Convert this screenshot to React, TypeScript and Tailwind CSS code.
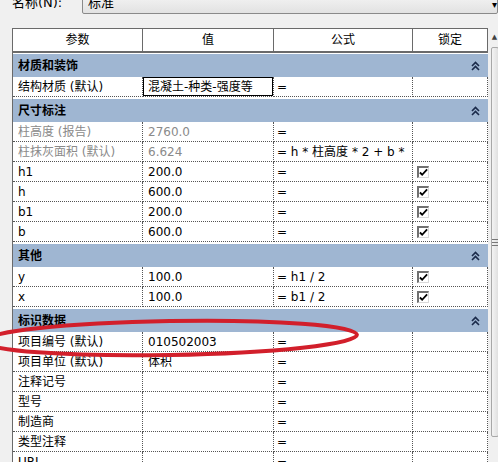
import React from 'react';

type Row =
  | { kind: 'section'; title: string }
  | { kind: 'row'; name: string; value?: string; formula?: string; locked?: boolean; muted?: boolean; editing?: boolean };

const rows: Row[] = [
  { kind: 'section', title: '材质和装饰' },
  { kind: 'row', name: '结构材质 (默认)', value: '混凝土-种类-强度等', formula: '=', editing: true },
  { kind: 'section', title: '尺寸标注' },
  { kind: 'row', name: '柱高度 (报告)', value: '2760.0', formula: '=', muted: true },
  { kind: 'row', name: '柱抹灰面积 (默认)', value: '6.624', formula: '= h * 柱高度 * 2 + b *', muted: true },
  { kind: 'row', name: 'h1', value: '200.0', formula: '=', locked: true },
  { kind: 'row', name: 'h', value: '600.0', formula: '=', locked: true },
  { kind: 'row', name: 'b1', value: '200.0', formula: '=', locked: true },
  { kind: 'row', name: 'b', value: '600.0', formula: '=', locked: true },
  { kind: 'section', title: '其他' },
  { kind: 'row', name: 'y', value: '100.0', formula: '= h1 / 2', locked: true },
  { kind: 'row', name: 'x', value: '100.0', formula: '= b1 / 2', locked: true },
  { kind: 'section', title: '标识数据' },
  { kind: 'row', name: '项目编号 (默认)', value: '010502003', formula: '=' },
  { kind: 'row', name: '项目单位 (默认)', value: '体积', formula: '=' },
  { kind: 'row', name: '注释记号', formula: '=' },
  { kind: 'row', name: '型号', formula: '=' },
  { kind: 'row', name: '制造商', formula: '=' },
  { kind: 'row', name: '类型注释', formula: '=' },
  { kind: 'row', name: 'URL', formula: '=' },
];

const font = "font-['DejaVu_Sans','Noto_Sans_CJK_SC',sans-serif]";

const Collapse = () => (
  <svg width="9" height="10" viewBox="0 0 9 10" className="text-[#1a2a4a]">
    <path d="M1 5 L4.5 1.5 L8 5 M1 9 L4.5 5.5 L8 9" fill="none" stroke="currentColor" strokeWidth="1.6" />
  </svg>
);

const Check = () => (
  <div className="w-[12px] h-[12px] border-l-2 border-t-2 border-l-[#707070] border-t-[#707070] border-r border-b border-r-[#d8d8d8] border-b-[#d8d8d8] bg-white flex items-center justify-center">
    <svg width="10" height="9" viewBox="0 0 10 9">
      <path d="M1 4.5 L3.5 7 L9 1" fill="none" stroke="#000" strokeWidth="2" />
    </svg>
  </div>
);

const cell = 'h-[20px] border-r border-b border-dotted border-[#555] flex items-center overflow-hidden whitespace-nowrap';

const App: React.FC = () => {
  return (
    <div className={`relative w-[498px] h-[462px] overflow-hidden bg-[#f0f0f0] text-[12px] text-black ${font}`}>
      {/* name bar */}
      <div className="flex items-center h-[14px] overflow-visible">
        <span className="ml-[12px] w-[70px] -mt-[8px] text-[13px]">名称(N):</span>
        <div className="-mt-[8px] h-[22px] flex-1 border border-[#8a8a8a] rounded-[2px] bg-gradient-to-b from-[#f6f6f6] to-[#e2e2e2] flex items-center pl-[5px] text-[13px]">
          标准
        </div>
        <span className="absolute right-[1px] top-[-3px] text-[10px]">▾</span>
      </div>

      <div className="flex mt-[14px]">
        {/* table */}
        <div className="ml-[12px] w-[476px] border-l border-[#6a6a6a] bg-white">
          <div className="grid grid-cols-[130px_131px_139px_75px] h-[25px] border-t border-b-2 border-[#6a6a6a] text-[12px]">
            <div className="flex items-center justify-center border-r border-[#6a6a6a]">参数</div>
            <div className="flex items-center justify-center border-r border-[#6a6a6a]">值</div>
            <div className="flex items-center justify-center border-r border-[#6a6a6a]">公式</div>
            <div className="flex items-center justify-center border-r border-[#6a6a6a]">锁定</div>
          </div>
          {rows.map((r, i) =>
            r.kind === 'section' ? (
              <div key={i} className={`${i === 0 ? 'mt-[1px]' : 'mt-[2px]'} h-[23px] bg-[#9fb6d2] flex items-center justify-between pl-[5px] pr-[8px] font-bold`}>
                <span>{r.title}</span>
                <Collapse />
              </div>
            ) : (
              <div key={i} className="grid grid-cols-[130px_131px_139px_75px]">
                <div className={`${cell} pl-[5px] ${r.muted ? 'text-[#8a8a8a]' : ''}`}>{r.name}</div>
                <div className={`${cell} ${r.muted ? 'text-[#8a8a8a]' : ''}`}>
                  {r.editing ? (
                    <div className="h-[19px] w-full border border-black pl-[4px] flex items-center">{r.value}</div>
                  ) : (
                    <span className="pl-[5px]">{r.value}</span>
                  )}
                </div>
                <div className={`${cell} pl-[3px]`}>{r.formula}</div>
                <div className={`${cell} pl-[4px]`}>{r.locked && <Check />}</div>
              </div>
            )
          )}
        </div>

        {/* scrollbar */}
        <div className="ml-[2px] w-[10px] flex flex-col">
          <div className="h-[19px] flex items-center justify-center text-[7px] text-[#404040]">▲</div>
          <div className="h-[390px] ml-[1px] border border-[#a8a8a8] rounded-[2px] bg-gradient-to-r from-[#f4f4f4] to-[#e0e0e0] flex flex-col items-center justify-center gap-[2px]">
            <div className="w-[6px] h-px bg-[#777]" />
            <div className="w-[6px] h-px bg-[#777]" />
            <div className="w-[6px] h-px bg-[#777]" />
          </div>
        </div>
      </div>

      {/* red annotation */}
      <svg className="absolute left-0 top-0 pointer-events-none" width="498" height="462">
        <ellipse cx="170" cy="338" rx="187" ry="17" transform="rotate(-1 170 338)" fill="none" stroke="#d21f2b" strokeWidth="4" />
      </svg>
    </div>
  );
};

export default App;
